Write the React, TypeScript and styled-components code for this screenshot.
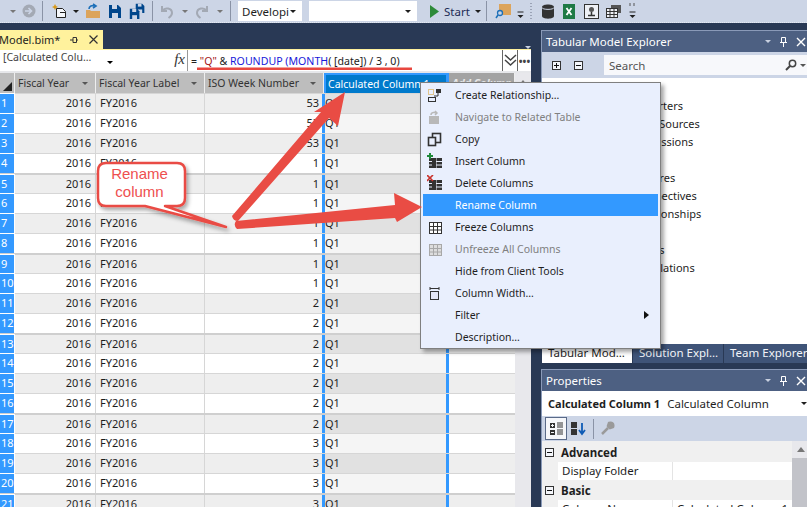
import React from "react";
import styled, { createGlobalStyle } from "styled-components";

const Global = createGlobalStyle`
  html, body { margin: 0; padding: 0; background: #293955; }
  #root { width: 807px; height: 507px; }
  * { box-sizing: border-box; }
`;

const FONT = `"Noto Sans", "Liberation Sans", sans-serif`;

const Page = styled.div`
  position: relative;
  width: 807px;
  height: 507px;
  overflow: hidden;
  background: #293955;
  font-family: ${FONT};
  font-size: 11px;
  color: #1e1e1e;
`;
const Toolbar = styled.div`
  height: 23px;
  background: #ccd5e6;
  border-bottom: 1px dotted #e4e9f2;
  display: flex;
  align-items: center;
  padding-left: 8px;
`;
const TbSlot = styled.div<{ $w: number }>`
  width: ${(p) => p.$w}px;
  height: 20px;
  flex: none;
  display: flex;
  align-items: center;
  justify-content: center;
`;
const TbSep = styled.div`
  width: 1px;
  height: 20px;
  flex: none;
  background: #8a93a6;
  margin: 0 3px 0 2px;
`;
const Combo = styled.div<{ $w: number; $first?: boolean }>`
  width: ${(p) => p.$w}px;
  height: 20px;
  flex: none;
  background: #fff;
  display: flex;
  align-items: center;
  justify-content: space-between;
  padding: 0 6px 0 4px;
  font-size: 11.5px;
  overflow: hidden;
  white-space: nowrap;
  margin-right: 7px;
  margin-left: ${(p) => (p.$first ? "4px" : "0")};
`;
const StartLabel = styled.span`
  font-size: 11.5px;
  color: #1b2a55;
  width: 28px;
  flex: none;
`;
const Caret = styled.i<{ $c?: string }>`
  display: inline-block;
  width: 0;
  height: 0;
  border-left: 3.5px solid transparent;
  border-right: 3.5px solid transparent;
  border-top: 3.5px solid ${(p) => p.$c ?? "#1e1e1e"};
`;
const Main = styled.div`
  display: flex;
  height: 484px;
`;
const DocPane = styled.div`
  width: 541px;
  flex: none;
  display: flex;
  flex-direction: column;
`;
const TabStrip = styled.div`
  height: 27px;
  flex: none;
  padding-top: 7px;
  display: flex;
  justify-content: space-between;
  border-bottom: 1px solid #fff29d;
  margin-right: 10px;
`;
const DocTab = styled.div`
  width: 103px;
  height: 19px;
  background: #fff29d;
  display: flex;
  align-items: center;
  justify-content: space-between;
  padding-right: 5px;
  font-size: 11px;
  white-space: nowrap;
  overflow: hidden;
`;
const TabName = styled.span`
  margin-left: -1px;
`;
const TabTools = styled.span`
  display: flex;
  align-items: center;
  gap: 11px;
`;
const StripCaret = styled.div`
  padding: 7px 0 0;
  margin-right: 0;
`;
const Editor = styled.div`
  width: 531px;
  flex: 1;
  min-height: 0;
  background: #eeeff2;
  display: flex;
  flex-direction: column;
`;
const FormulaBar = styled.div`
  height: 23px;
  flex: none;
  background: #fff;
  display: flex;
  align-items: stretch;
  border-bottom: 2px solid #e6e7ea;
`;
const NameBox = styled.div`
  width: 117px;
  flex: none;
  padding: 0 0 0 3px;
  display: flex;
  align-items: flex-start;
  justify-content: space-between;
  color: #444;
  font-size: 10.5px;
  white-space: nowrap;
`;
const NameArrow = styled.span`
  padding: 3px 4px 0 0;
`;
const Fx = styled.div`
  width: 71px;
  flex: none;
  border-right: 1px solid #999;
  text-align: right;
  padding: 1px 2px 0 0;
  font: italic 15px "Liberation Serif", serif;
  color: #333;
`;
const Formula = styled.div`
  flex: 1;
  padding: 4px 0 0 3px;
  font-size: 10.6px;
  color: #222;
  white-space: pre;
`;
const Red = styled.span`
  color: #a31515;
`;
const Blue = styled.span`
  color: #1818d8;
`;
const FormulaBtn = styled.div<{ $w: number }>`
  width: ${(p) => p.$w}px;
  flex: none;
  border-left: 1px solid #666;
  display: flex;
  align-items: center;
  justify-content: center;
  font-weight: 700;
  font-size: 10px;
  color: #444;
`;
const GridWrap = styled.div`
  flex: 1;
  min-height: 0;
  display: flex;
  overflow: hidden;
`;
const GridArea = styled.div`
  width: 515px;
  flex: none;
`;
const Row = styled.div`
  display: grid;
  grid-template-columns: 15px 81px 109px 119px 125px 66px;
`;
const HeaderRow = styled(Row)`
  height: 20px;
  background: #eeeff2;
`;
const Corner = styled.div`
  background: #bdbdbd;
  position: relative;
  border-right: 1px solid #eee;
  &::after {
    content: "";
    position: absolute;
    right: 2px;
    bottom: 2px;
    border-left: 9px solid transparent;
    border-bottom: 9px solid #222;
  }
`;
const HeadCell = styled.div<{ $sel?: boolean; $add?: boolean }>`
  background: ${(p) => (p.$sel ? "#007acc" : p.$add ? "#a3a3a3" : "#bdbdbd")};
  color: ${(p) => (p.$sel ? "#fff" : p.$add ? "#e8e8e8" : "#333")};
  font-style: ${(p) => (p.$add ? "italic" : "normal")};
  font-weight: ${(p) => (p.$add ? 700 : 400)};
  border-right: 1px solid #eee;
  border-top: ${(p) => (p.$sel ? "2px solid #3399ff" : "0")};
  border-left: ${(p) => (p.$sel ? "2px solid #3399ff" : "0")};
  ${(p) => (p.$sel ? "border-right: 3px solid #3399ff;" : "")}
  display: flex;
  align-items: center;
  justify-content: space-between;
  padding: 0 7px 0 ${(p) => (p.$sel ? "2px" : "3px")};
  overflow: hidden;
  white-space: nowrap;
  font-size: 10.5px;
`;
const BodyRow = styled(Row)<{ $thick: boolean; $alt: boolean }>`
  height: 20px;
  background: ${(p) => (p.$alt ? "#eeeeee" : "#fff")};
  border-top: ${(p) => (p.$thick ? "2px solid #cfcfcf" : "1px solid #d6d6d6")};
  line-height: 18px;
`;
const RowNum = styled.div`
  background: #3399ff;
  color: #fff;
  border-right: 1px solid #fff;
  font-size: 11px;
  padding-left: 1px;
  margin-top: -1px;
  border-top: 1px solid #fff;
`;
const Cell = styled.div<{ $right?: boolean }>`
  text-align: ${(p) => (p.$right ? "right" : "left")};
  padding: 0 4px;
  border-right: 1px solid #d6d6d6;
  font-size: 11px;
  overflow: hidden;
`;
const SelCell = styled.div<{ $alt: boolean }>`
  background: ${(p) => (p.$alt ? "#e1e1e1" : "#f5f5f5")};
  border-left: 3px solid #3399ff;
  border-right: 3px solid #3399ff;
  padding-left: 0;
  font-size: 11px;
  margin-left: -2px;
  overflow: hidden;
`;
const Filler = styled.div``;
const ScrollBar = styled.div`
  flex: 1;
  background: #e8e8ec;
  display: flex;
  justify-content: center;
  padding-top: 7px;
`;
const UpCaret = styled.i`
  width: 0;
  height: 0;
  border-left: 4px solid transparent;
  border-right: 4px solid transparent;
  border-bottom: 5px solid #777;
`;
const Side = styled.div`
  flex: 1;
  padding-top: 7px;
  display: flex;
  flex-direction: column;
`;
const Panel = styled.div<{ $h: number }>`
  height: ${(p) => p.$h}px;
  flex: none;
  border-left: 1px solid #8a9ab8;
  border-top: 1px solid #8a9ab8;
  display: flex;
  flex-direction: column;
  overflow: hidden;
`;
const PanelTitle = styled.div`
  height: 21px;
  flex: none;
  background: #4d6082;
  color: #fff;
  display: flex;
  align-items: center;
  justify-content: space-between;
  padding: 0 4px 0 4px;
  font-size: 11.5px;
  white-space: nowrap;
`;
const TitleTools = styled.div`
  display: flex;
  align-items: center;
  gap: 8px;
`;
const ExplorerBar = styled.div`
  height: 26px;
  flex: none;
  background: #ccd5e6;
  display: flex;
  align-items: center;
  padding-left: 10px;
  gap: 13px;
`;
const SmallBox = styled.span`
  width: 9px;
  height: 9px;
  border: 1px solid #333;
  background: #f4f6fa;
  position: relative;
  display: inline-block;
  flex: none;
`;
const PlusBar = styled.i<{ $v?: boolean }>`
  position: absolute;
  background: #111;
  ${(p) =>
    p.$v
      ? "left: 3px; top: 1px; width: 1px; height: 5px;"
      : "left: 1px; top: 3px; width: 5px; height: 1px;"}
`;
const SearchBox = styled.div`
  margin-left: 8px;
  flex: 1;
  height: 20px;
  background: #f7f8fb;
  color: #555;
  display: flex;
  align-items: center;
  justify-content: space-between;
  padding: 0 4px 0 5px;
  font-size: 11.5px;
`;
const SearchTail = styled.span`
  display: flex;
  align-items: center;
  gap: 3px;
`;
const Tree = styled.div`
  flex: 1;
  background: #fff;
  padding: 19px 0 0 90px;
`;
const TreeItem = styled.div`
  height: 18px;
  line-height: 18px;
  font-size: 11px;
  white-space: nowrap;
`;
const TabsRow = styled.div`
  height: 19px;
  flex: none;
  display: flex;
  align-items: flex-start;
  background: #293955;
  padding-left: 1px;
  margin-bottom: 6px;
`;
const ToolTab = styled.div<{ $active?: boolean; $w: number }>`
  width: ${(p) => p.$w}px;
  height: 19px;
  flex: none;
  background: ${(p) => (p.$active ? "#fff" : "#3f5478")};
  color: ${(p) => (p.$active ? "#1e1e1e" : "#f2f4f8")};
  font-size: 11.5px;
  padding-left: 6px;
  margin-right: 1px;
  white-space: nowrap;
  overflow: hidden;
  line-height: 18px;
`;
const ObjectRow = styled.div`
  height: 25px;
  flex: none;
  background: #fff;
  display: flex;
  align-items: center;
  justify-content: space-between;
  padding: 0 3px 0 6px;
  font-size: 11.5px;
  white-space: nowrap;
`;
const ObjectName = styled.span`
  b {
    font-weight: 700;
    font-size: 11px;
    margin-right: 7px;
  }
`;
const PropBar = styled.div`
  height: 25px;
  flex: none;
  background: #ccd5e6;
  display: flex;
  align-items: center;
  padding-left: 3px;
`;
const PropBtn = styled.div<{ $on?: boolean }>`
  width: 22px;
  height: 23px;
  display: flex;
  align-items: center;
  justify-content: center;
  background: ${(p) => (p.$on ? "#f6f7fa" : "transparent")};
  border: ${(p) => (p.$on ? "1px solid #5a6a88" : "0")};
`;
const PropSep = styled.div`
  width: 1px;
  height: 20px;
  background: #8a93a6;
  margin: 0 2px 0 4px;
`;
const PropBody = styled.div`
  flex: 1;
  display: flex;
  background: #ccd5e6;
  min-height: 0;
`;
const PropList = styled.div`
  width: 250px;
  flex: none;
  padding-top: 1px;
  background: #f0f0f0;
  font-size: 11.5px;
`;
const PropCat = styled.div`
  height: 20px;
  display: flex;
  align-items: center;
  gap: 7px;
  padding-left: 3px;
  font-weight: 700;
`;
const PropRow = styled.div`
  height: 18px;
  margin-left: 16px;
  display: grid;
  grid-template-columns: 110px 1fr;
  background: #fff;
  line-height: 17px;
  white-space: nowrap;
  overflow: hidden;
  padding-left: 4px;
`;
const PropValue = styled.span`
  padding-left: 4px;
  border-left: 1px solid #e4e4e4;
`;
const PropScroll = styled.div`
  flex: 1;
  background: #e8e8ec;
  display: flex;
  flex-direction: column;
  align-items: center;
  padding-top: 6px;
  gap: 6px;
`;
const Thumb = styled.div`
  width: 100%;
  flex: 1;
  margin: 0 3px;
  background: #c2c3c9;
`;
const Menu = styled.div`
  position: absolute;
  left: 420px;
  top: 82px;
  width: 241px;
  height: 267px;
  padding: 1px 1px;
  background: #e9effd;
  border: 1px solid #7f7f7f;
  box-shadow: 3px 3px 4px rgba(0, 0, 0, 0.35);
  z-index: 4;
`;
const MenuItem = styled.div<{ $hot?: boolean; $off?: boolean }>`
  height: 22px;
  display: flex;
  align-items: center;
  background: ${(p) => (p.$hot ? "#3399ff" : "transparent")};
  color: ${(p) => (p.$hot ? "#fff" : p.$off ? "#808080" : "#1e1e1e")};
  margin: 0 1px;
  font-size: 10.5px;
  position: relative;
`;
const MenuIcon = styled.span`
  width: 32px;
  flex: none;
  display: flex;
  justify-content: center;
  padding-right: 9px;
`;
const SubArrow = styled.i`
  position: absolute;
  right: 9px;
  top: 7px;
  border-top: 4px solid transparent;
  border-bottom: 4px solid transparent;
  border-left: 5px solid #111;
`;
const Overlay = styled.svg`
  position: absolute;
  left: 0;
  top: 0;
  pointer-events: none;
  z-index: 5;
`;
const CalloutText = styled.div`
  position: absolute;
  left: 95px;
  top: 165px;
  width: 89px;
  text-align: center;
  color: #ee4f4f;
  font: 15px/17.500px "Liberation Sans", sans-serif;
  z-index: 6;
`;

const S = ({ w = 16, h = 16, children }: { w?: number; h?: number; children: React.ReactNode }) => (
  <svg width={w} height={h} viewBox={`0 0 ${w} ${h}`}>
    {children}
  </svg>
);

const Floppy = ({ x = 0, y = 0, s = 1 }: { x?: number; y?: number; s?: number }) => (
  <g transform={`translate(${x} ${y}) scale(${s})`}>
    <path d="M1 1h9l3 3v10H1z" fill="#00468c" />
    <rect x="4" y="1" width="5" height="4" fill="#ccd5e6" />
    <rect x="4" y="9" width="6" height="5" fill="#ccd5e6" />
  </g>
);

const MiniTable = ({ gray }: { gray?: boolean }) => {
  const c = gray ? "#a8a8a8" : "#333";
  return (
    <S w={16} h={16}>
      <rect x="2.5" y="3.5" width="12" height="11" fill={gray ? "#ddd" : "#fff"} stroke={c} />
      <path d={`M2 7.5h13M2 11h13M6.5 3v11M10.5 3v11`} stroke={c} />
    </S>
  );
};

const ColTable = ({ accent }: { accent: React.ReactNode }) => (
  <S w={16} h={16}>
    <rect x="2" y="5" width="13" height="10" fill="#333" />
    <path d="M9 5v10M2 8.5h13M2 12h13" stroke="#e9effd" />
    <rect x="5" y="5" width="4" height="10" fill="#333" />
    {accent}
  </S>
);

const rows = Array.from({ length: 21 }, (_, i) => ({
  n: i + 1,
  iso: i < 3 ? 53 : i < 10 ? 1 : i < 17 ? 2 : 3,
}));

const tree = ["Reporters", "Data Sources", "Expressions", "KPIs", "Cultures", "Perspectives", "Relationships", "Roles", "Tables", "Translations"];

const Pin = ({ c = "#fff" }: { c?: string }) => (
  <S w={9} h={12}>
    <path d="M2.5 1.5h4v5h-4zM1 6.5h7M4.5 7v4" stroke={c} fill="none" />
  </S>
);
const Close = ({ c = "#fff" }: { c?: string }) => (
  <S w={10} h={10}>
    <path d="M1 1l8 8M9 1l-8 8" stroke={c} strokeWidth="1.4" />
  </S>
);

export default function App() {
  return (
    <Page>
      <Global />
      <Toolbar>
        <TbSlot $w={10}><Caret $c="#777" /></TbSlot>
        <TbSlot $w={22}>
          <S w={14} h={14}>
            <circle cx="7" cy="7" r="6.5" fill="#a3a9b4" />
            <path d="M3 7h6M6.5 4l3 3-3 3" stroke="#ccd5e6" strokeWidth="1.6" fill="none" />
          </S>
        </TbSlot>
        <TbSep />
        <TbSlot $w={26}>
          <S w={16} h={16}>
            <path d="M5.5 5.5h6l3 3v6h-9zM9 9.5h5.5" stroke="#222" fill="#f4f6fa" />
            <path d="M4 1l1 2 2 1-2 1-1 2-1-2-2-1 2-1z" fill="#d89a1c" />
          </S>
        </TbSlot>
        <TbSlot $w={8}><Caret /></TbSlot>
        <TbSlot $w={26}>
          <S w={16} h={16}>
            <path d="M1 7h4l1 1h9v7H1z" fill="#dca45c" />
            <path d="M4 6c0-3 3-4 6-3M8 1l3 2-3 2" stroke="#1c6fb8" strokeWidth="1.6" fill="none" />
          </S>
        </TbSlot>
        <TbSlot $w={18}><S w={14} h={15}><Floppy /></S></TbSlot>
        <TbSlot $w={26}>
          <S w={16} h={16}>
            <Floppy x={6} y={0} s={0.72} />
            <Floppy x={0} y={5} s={0.8} />
          </S>
        </TbSlot>
        <TbSep />
        <TbSlot $w={22}>
          <S w={14} h={15}>
            <path d="M2 2v5h5M2.5 6.5C5 3 12 4 12 9c0 2.500-2 4-3.500 5" stroke="#a3a9b4" strokeWidth="2" fill="none" />
          </S>
        </TbSlot>
        <TbSlot $w={14}><Caret $c="#777" /></TbSlot>
        <TbSlot $w={20}>
          <S w={14} h={15}>
            <path d="M12 2v5H7M11.500 6.500C9 3 2 4 2 9c0 2.500 2 4 3.500 5" stroke="#a3a9b4" strokeWidth="2" fill="none" />
          </S>
        </TbSlot>
        <TbSlot $w={16}><Caret $c="#777" /></TbSlot>
        <TbSep />
        <Combo $w={64} $first>Developi <Caret /></Combo>
        <Combo $w={108}><span /> <Caret /></Combo>
        <TbSlot $w={20}>
          <S w={10} h={13}><path d="M1 0l9 6.500-9 6.500z" fill="#2e8b3a" /></S>
        </TbSlot>
        <StartLabel>Start</StartLabel>
        <TbSlot $w={12}><Caret /></TbSlot>
        <TbSep />
        <TbSlot $w={26}>
          <S w={16} h={16}>
            <path d="M4 1h12v11H4z" fill="#dca45c" />
            <circle cx="5" cy="10" r="2.500" fill="#ccd5e6" stroke="#1c6fb8" strokeWidth="1.300" />
            <path d="M3 12l-2 3" stroke="#1c6fb8" strokeWidth="1.500" />
          </S>
        </TbSlot>
        <TbSlot $w={9}>
          <S w={7} h={18}><path d="M0.500 10h6" stroke="#222" /><path d="M0.500 13h6l-3 3z" fill="#222" /></S>
        </TbSlot>
        <TbSlot $w={13}>
          <S w={3} h={18}><path d="M1 1v16" stroke="#8a93a6" strokeDasharray="1 2" strokeWidth="1.500" /></S>
        </TbSlot>
        <TbSlot $w={20}>
          <S w={14} h={15}>
            <path d="M1 3c0-3.500 12-3.500 12 0v9c0 3.500-12 3.500-12 0z" fill="#333" />
            <path d="M1 3.500c0 2.500 12 2.500 12 0" stroke="#ccd5e6" fill="none" />
          </S>
        </TbSlot>
        <TbSlot $w={22}>
          <S w={12} h={15}>
            <rect width="12" height="15" fill="#1f7a45" />
            <path d="M3.500 4l5 7M8.500 4l-5 7" stroke="#fff" strokeWidth="1.800" />
          </S>
        </TbSlot>
        <TbSlot $w={23}>
          <S w={15} h={15}>
            <rect x="0.500" y="0.500" width="14" height="14" fill="#eef0f5" stroke="#333" />
            <circle cx="7.500" cy="5.500" r="2.500" fill="#555" />
            <path d="M7.500 8v3M4 11.500h7" stroke="#333" strokeWidth="1.500" />
          </S>
        </TbSlot>
        <TbSlot $w={22}>
          <S w={16} h={14}>
            <path d="M5 1h10v8H5z" fill="#555" />
            <rect x="0.500" y="4.500" width="11" height="9" fill="#eef0f5" stroke="#333" />
            <path d="M0 7.500h12M0 10.500h12M4 4v10M8 4v10" stroke="#333" />
          </S>
        </TbSlot>
        <TbSlot $w={14}>
          <S w={7} h={18}>
            <path d="M1 1v3M5 1v3" stroke="#555" />
            <path d="M0.500 10h6" stroke="#222" />
            <path d="M0.500 13h6l-3 3z" fill="#222" />
          </S>
        </TbSlot>
      </Toolbar>
      <Main>
        <DocPane>
          <TabStrip>
            <DocTab>
              <TabName>Model.bim*</TabName>
              <TabTools>
                <S w={8} h={8}><path d="M0 4h3M3 1.500h3.500v5H3zM6.500 4H8" stroke="#333" fill="none" /></S>
                <S w={9} h={9}><path d="M0.500 0.500l8 8M8.500 0.500l-8 8" stroke="#333" strokeWidth="1.200" /></S>
              </TabTools>
            </DocTab>
            <StripCaret><Caret $c="#c8d0e0" /></StripCaret>
          </TabStrip>
          <Editor>
            <FormulaBar>
              <NameBox>
                <span>[Calculated Colu…</span>
                <NameArrow><Caret $c="#000" /></NameArrow>
              </NameBox>
              <Fx>fx</Fx>
              <Formula>
                {"= "}<Red>"Q"</Red>{" & "}<Blue>ROUNDUP (MONTH</Blue>{"( [date]) / 3 , 0)"}
              </Formula>
              <FormulaBtn $w={15}>
                <S w={13} h={13}>
                  <path d="M1 1l5.500 5 5.500-5M1 6l5.500 5 5.500-5" stroke="#444" strokeWidth="1.500" fill="none" />
                </S>
              </FormulaBtn>
              <FormulaBtn $w={14}>•••</FormulaBtn>
            </FormulaBar>
            <GridWrap>
              <GridArea>
                <HeaderRow>
                  <Corner />
                  <HeadCell>Fiscal Year <Caret $c="#555" /></HeadCell>
                  <HeadCell>Fiscal Year Label <Caret $c="#555" /></HeadCell>
                  <HeadCell>ISO Week Number <Caret $c="#555" /></HeadCell>
                  <HeadCell $sel>Calculated Column 1 <Caret $c="#cfe4fa" /></HeadCell>
                  <HeadCell $add>Add Column</HeadCell>
                </HeaderRow>
                {rows.map((r) => {
                  const alt = r.n % 2 === 1;
                  return (
                    <BodyRow key={r.n} $alt={alt} $thick={r.n % 4 === 1 && r.n > 1}>
                      <RowNum>{r.n}</RowNum>
                      <Cell $right>2016</Cell>
                      <Cell>FY2016</Cell>
                      <Cell $right>{r.iso}</Cell>
                      <SelCell $alt={alt}>Q1</SelCell>
                      <Filler />
                    </BodyRow>
                  );
                })}
              </GridArea>
              <ScrollBar><UpCaret /></ScrollBar>
            </GridWrap>
          </Editor>
        </DocPane>
        <Side>
          <Panel $h={314}>
            <PanelTitle>
              Tabular Model Explorer
              <TitleTools>
                <Caret $c="#c8d0e0" />
                <Pin />
                <Close />
              </TitleTools>
            </PanelTitle>
            <ExplorerBar>
              <SmallBox><PlusBar /><PlusBar $v /></SmallBox>
              <SmallBox><PlusBar /></SmallBox>
              <SearchBox>
                Search
                <SearchTail>
                  <S w={12} h={12}>
                    <circle cx="7.500" cy="4.500" r="3.200" fill="none" stroke="#444" strokeWidth="1.500" />
                    <path d="M5 7l-4 4" stroke="#444" strokeWidth="2" />
                  </S>
                  <Caret $c="#555" />
                </SearchTail>
              </SearchBox>
            </ExplorerBar>
            <Tree>
              {tree.map((t) => <TreeItem key={t}>{t}</TreeItem>)}
            </Tree>
          </Panel>
          <TabsRow>
            <ToolTab $active $w={90}>Tabular Mod…</ToolTab>
            <ToolTab $w={90}>Solution Expl…</ToolTab>
            <ToolTab $w={85}>Team Explorer</ToolTab>
          </TabsRow>
          <Panel $h={140}>
            <PanelTitle>
              Properties
              <TitleTools>
                <Caret $c="#c8d0e0" />
                <Pin />
                <Close />
              </TitleTools>
            </PanelTitle>
            <ObjectRow>
              <ObjectName><b>Calculated Column 1</b>Calculated Column</ObjectName>
              <Caret />
            </ObjectRow>
            <PropBar>
              <PropBtn $on>
                <S w={15} h={15}>
                  <path d="M1 2h5v5H1zM1 9h5v5H1z" fill="#333" />
                  <path d="M2 4.500h3M3.500 3v3M2 11.500h3" stroke="#f6f7fa" />
                  <path d="M8 2h6M8 4h6M8 6h6M8 9h6M8 11h6M8 13h6" stroke="#333" />
                </S>
              </PropBtn>
              <PropBtn>
                <S w={16} h={15}>
                  <path d="M1 1h6v6H1zM1 8h6v6H1z" fill="#333" />
                  <path d="M12 2v10M9 9l3 4 3-4" stroke="#0e5bb5" strokeWidth="1.800" fill="none" />
                </S>
              </PropBtn>
              <PropSep />
              <PropBtn>
                <S w={15} h={15}>
                  <path d="M2 13l6-6M9 2c3-1 5 1 4 4l-3 1-2-2z" stroke="#9a9a9a" strokeWidth="2.500" fill="#9a9a9a" />
                </S>
              </PropBtn>
            </PropBar>
            <PropBody>
              <PropList>
                <PropCat><SmallBox><PlusBar /></SmallBox>Advanced</PropCat>
                <PropRow>Display Folder<PropValue /></PropRow>
                <PropCat><SmallBox><PlusBar /></SmallBox>Basic</PropCat>
                <PropRow>Column Name<PropValue>Calculated Column 1</PropValue></PropRow>
              </PropList>
              <PropScroll>
                <UpCaret />
                <Thumb />
              </PropScroll>
            </PropBody>
          </Panel>
        </Side>
      </Main>
      <Menu>
        <MenuItem>
          <MenuIcon>
            <S w={15} h={15}>
              <rect x="1.500" y="1.500" width="5" height="5" fill="none" stroke="#d89a1c" strokeDasharray="1 1" />
              <rect x="9" y="1" width="5" height="4" fill="#333" />
              <rect x="1.500" y="9.500" width="7" height="4" fill="none" stroke="#333" />
              <path d="M11 5v3H7" stroke="#333" fill="none" />
            </S>
          </MenuIcon>
          Create Relationship…
        </MenuItem>
        <MenuItem $off>
          <MenuIcon>
            <S w={15} h={15}>
              <path d="M2 6h10v8H2z" fill="#b8b8b8" />
              <path d="M4 5c0-3 4-3 6-2M8 1l2 2-2 2" stroke="#b8b8b8" strokeWidth="1.500" fill="none" />
            </S>
          </MenuIcon>
          Navigate to Related Table
        </MenuItem>
        <MenuItem>
          <MenuIcon>
            <S w={15} h={15}>
              <rect x="5.500" y="1.500" width="8" height="9" fill="none" stroke="#333" strokeWidth="1.600" />
              <rect x="1.500" y="5.500" width="7" height="8" fill="#e9effd" stroke="#333" strokeWidth="1.600" />
            </S>
          </MenuIcon>
          Copy
        </MenuItem>
        <MenuItem>
          <MenuIcon>
            <ColTable accent={<path d="M0 3h6M3 0v6" stroke="#1f8a3a" strokeWidth="2" />} />
          </MenuIcon>
          Insert Column
        </MenuItem>
        <MenuItem>
          <MenuIcon>
            <ColTable accent={<path d="M0 0l6 6M6 0l-6 6" stroke="#c8322c" strokeWidth="1.600" />} />
          </MenuIcon>
          Delete Columns
        </MenuItem>
        <MenuItem $hot><MenuIcon />Rename Column</MenuItem>
        <MenuItem><MenuIcon><MiniTable /></MenuIcon>Freeze Columns</MenuItem>
        <MenuItem $off><MenuIcon><MiniTable gray /></MenuIcon>Unfreeze All Columns</MenuItem>
        <MenuItem><MenuIcon />Hide from Client Tools</MenuItem>
        <MenuItem>
          <MenuIcon>
            <S w={15} h={15}>
              <path d="M3 2.500h9M3 1v3M12 1v3" stroke="#333" />
              <rect x="3.500" y="5.500" width="8" height="8" fill="#e4e6f6" stroke="#333" />
            </S>
          </MenuIcon>
          Column Width…
        </MenuItem>
        <MenuItem><MenuIcon />Filter<SubArrow /></MenuItem>
        <MenuItem><MenuIcon />Description…</MenuItem>
      </Menu>
      <Overlay width={807} height={507} viewBox="0 0 807 507">
        <defs>
          <filter id="soft" x="-20%" y="-20%" width="140%" height="140%">
            <feDropShadow dx="2" dy="3" stdDeviation="2" floodColor="#000" floodOpacity="0.35" />
          </filter>
        </defs>
        <rect x="197" y="67.500" width="215" height="2.500" fill="#e8473f" />
        <path
          d="M105 163 H177 Q185 163 185 171 V198 Q185 206 177 206 H165 L226 227 L145 206 H106 Q98 206 98 198 V171 Q98 163 106 163 Z"
          fill="#fff"
          stroke="#e94c44"
          strokeWidth="2.500"
          strokeLinejoin="round"
          filter="url(#soft)"
        />
        <path
          d="M232 216 L321 112 L314 112 L345 92 L338 126 L329 118 L238 221 Q233 221 232 216 Z"
          fill="#e94c44"
          strokeLinejoin="round"
        />
        <path
          d="M236 221 L395 205 L394 193 L422 207 L397 222 L395 218 L237 229 Q233 225 236 221 Z"
          fill="#e94c44"
          strokeLinejoin="round"
        />
      </Overlay>
      <CalloutText>Rename<br />column</CalloutText>
    </Page>
  );
}
